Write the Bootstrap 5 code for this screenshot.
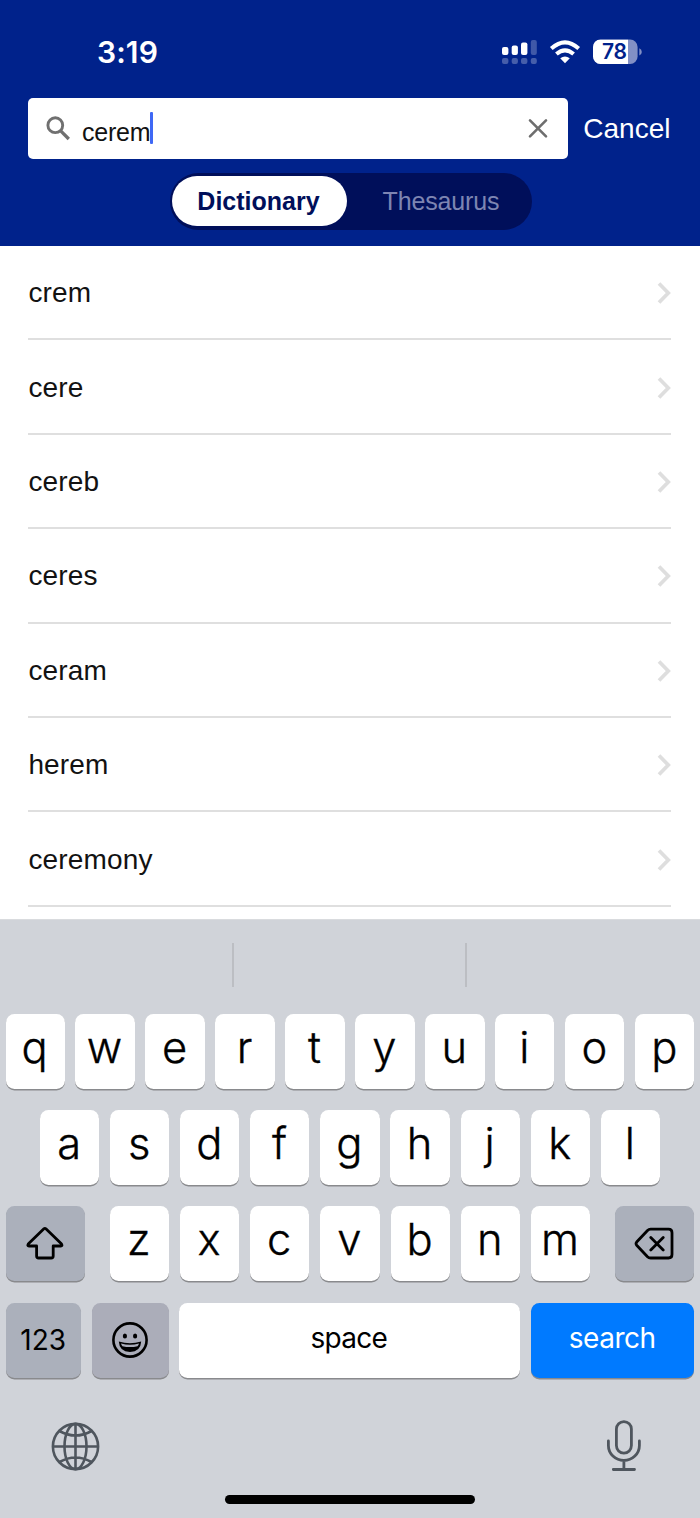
<!DOCTYPE html>
<html lang="en">
<head>
<meta charset="utf-8">
<meta name="viewport" content="width=device-width, initial-scale=1">
<title>Dictionary search</title>
<link href="https://cdn.jsdelivr.net/npm/bootstrap@5.3.0/dist/css/bootstrap.min.css" rel="stylesheet">
<style>
  body { font-family: "Liberation Sans", Arial, sans-serif; background: #fff; color: #121212; }
  .screen { width: 700px; height: 1518px; overflow: hidden; }
  svg { display: block; flex: none; }
  .app-head { height: 246px; background: #00228b; }
  .status { height: 98px; padding: 6px 58px 0 97px; font-family: Inter, sans-serif; }
  .clock { font-size: 30px; font-weight: 600; letter-spacing: .1px; line-height: 1; }
  .search-line { height: 60.5px; padding: 0 29.5px 0 28.4px; }
  .search-box { width: 539.5px; height: 60.5px; background: #fff; border-radius: 5px; padding: 0 19.4px 0 17.6px; }
  .query { font-size: 25px; line-height: 1; padding-top: 8px; margin-left: 10.9px; letter-spacing: -.2px; }
  .caret { width: 3px; height: 32px; border-radius: 1px; background: #3f68f5; margin-left: -.2px; }
  .cancel { font-size: 28px; line-height: 1; padding-top: 2px; }
  .switch { width: 362px; height: 57px; margin-top: 14px; margin-left: 170px; background: #000f5a; border-radius: 29px; padding: 0 2px; font-size: 25px; line-height: 1; }
  .switch-on { width: 175px; height: 50px; border-radius: 25px; background: #fff; color: #000f5a; padding-right: 2px; }
  .switch-off { width: 183px; padding-left: 5px; color: #7d85b2; letter-spacing: -.15px; }
  .results { height: 673px; overflow: hidden; padding: 0 28.6px 0 28.4px; }
  .result { height: 94.4px; padding-top: 2px; border-bottom: 2px solid #dfdfdf; font-size: 28px; line-height: 1; letter-spacing: .15px; }
  .keyboard { height: 599px; background: #d0d3d9; font-family: Inter, sans-serif; color: #000; border-top: 1px solid #d9dbde; }
  .suggest { height: 94px; padding: 23px 0 0 232px; }
  .suggest > div { height: 44px; width: 233px; border-left: 2px solid #bcbec3; }
  .keys { height: 75px; margin-bottom: 21.2px; padding: 0 5.5px; }
  .keys-mid { padding: 0 40px; }
  .keyc { display: flex; align-items: center; justify-content: center; height: 75px; border-radius: 8.5px; background: #fff; box-shadow: 0 1.6px 0 #898a8d; line-height: 1; flex: none; width: 59.2px; font-size: 43.5px; font-weight: 300; -webkit-text-stroke: .35px currentColor; padding: 0 1px 7.5px 0; }
  .gray { background: #abb0bb; padding: 0; }
  .label { font-size: 28px; font-weight: 400; -webkit-text-stroke: 0; }
  .z-row { width: 480.4px; }
  .w-side { width: 79px; padding-right: 1px; }
  .w-num { width: 75.5px; }
  .w-emoji { width: 77px; background: #abadb9; }
  .w-space { width: 341px; padding: 0 2px 5px 0; letter-spacing: -.7px; }
  .w-search { width: 163.5px; padding: 0 1px 5px 0; background: #007aff; color: #fff; letter-spacing: -.5px; }
  .dock { padding: 39px 57px 0 51px; height: 98px; }
  .home-wrap { padding-top: 19px; }
  .home-bar { width: 250px; height: 9px; border-radius: 5px; background: #000; }
</style>
</head>
<body>
<div class="screen">
  <header class="app-head">
    <div class="status d-flex align-items-center justify-content-between text-white">
      <span class="clock">3:19</span>
      <svg width="142" height="30" viewBox="500 37 142 30">
        <g fill="#fff">
          <rect x="502" y="47" width="6.4" height="8" rx="2"/><rect x="511.7" y="45.6" width="6.2" height="9.4" rx="2"/><rect x="521" y="42.6" width="6.4" height="12.4" rx="2"/>
          <rect x="530.8" y="40" width="6" height="15" rx="2" opacity=".25"/>
          <g opacity=".27"><rect x="502" y="58" width="6.4" height="6" rx="2"/><rect x="511.7" y="58" width="6.2" height="6" rx="2"/><rect x="521" y="58" width="6.4" height="6" rx="2"/><rect x="530.8" y="58" width="6" height="6" rx="2"/></g>
          <path d="M560.2 58.3Q565 54.8 569.8 58.3L565 63.2Z"/>
        </g>
        <path d="M551.3 48.6Q565 36.2 578.7 48.6M556.4 54.1Q565 46.6 573.6 54.1" fill="none" stroke="#fff" stroke-width="4"/>
        <clipPath id="charge"><rect x="593" y="39.5" width="35" height="25"/></clipPath>
        <rect x="593" y="39.5" width="44.6" height="24.5" rx="7.5" fill="#8290c5"/>
        <rect x="593" y="39.5" width="44.6" height="24.5" rx="7.5" fill="#fff" clip-path="url(#charge)"/>
        <path d="M639.3 48.2Q641.8 49.5 641.8 52T639.3 55.6Z" fill="#8290c5"/>
        <text x="614.3" y="59.3" font-size="21" font-weight="600" text-anchor="middle" fill="#00228b" letter-spacing="-.3">78</text>
      </svg>
    </div>
    <div class="search-line d-flex align-items-center justify-content-between">
      <div class="search-box d-flex align-items-center">
        <svg width="25" height="25" viewBox="0 0 25 25" fill="none" stroke="#707070"><circle cx="9.3" cy="9.2" r="7.4" stroke-width="2.9"/><path d="M14.7 14.8L22.8 23" stroke-width="3.3"/></svg>
        <span class="query">cerem</span><span class="caret"></span>
        <svg class="ms-auto" width="22" height="22" viewBox="0 0 22 22" fill="none" stroke="#6e6e6e" stroke-width="2.6" stroke-linecap="round"><path d="M3 3.4l16 16M19 3.4l-16 16"/></svg>
      </div>
      <span class="cancel text-white">Cancel</span>
    </div>
    <div class="switch d-flex align-items-center">
      <span class="switch-on d-flex align-items-center justify-content-center fw-bold">Dictionary</span>
      <span class="switch-off text-center">Thesaurus</span>
    </div>
  </header>

  <svg width="0" height="0" class="position-absolute"><symbol id="chev" viewBox="0 0 14 22"><path d="M2 1.5L11.3 11L2 20.5" fill="none" stroke="#dedede" stroke-width="3.7"/></symbol></svg>
  <main class="results">
    <div class="result d-flex align-items-center justify-content-between"><span>crem</span><svg width="14" height="22"><use href="#chev"/></svg></div>
    <div class="result d-flex align-items-center justify-content-between"><span>cere</span><svg width="14" height="22"><use href="#chev"/></svg></div>
    <div class="result d-flex align-items-center justify-content-between"><span>cereb</span><svg width="14" height="22"><use href="#chev"/></svg></div>
    <div class="result d-flex align-items-center justify-content-between"><span>ceres</span><svg width="14" height="22"><use href="#chev"/></svg></div>
    <div class="result d-flex align-items-center justify-content-between"><span>ceram</span><svg width="14" height="22"><use href="#chev"/></svg></div>
    <div class="result d-flex align-items-center justify-content-between"><span>herem</span><svg width="14" height="22"><use href="#chev"/></svg></div>
    <div class="result d-flex align-items-center justify-content-between"><span>ceremony</span><svg width="14" height="22"><use href="#chev"/></svg></div>
  </main>

  <section class="keyboard">
    <div class="suggest d-flex"><div></div><div></div></div>
    <div class="keys d-flex justify-content-between">
      <span class="keyc">q</span><span class="keyc">w</span><span class="keyc">e</span><span class="keyc">r</span><span class="keyc">t</span><span class="keyc">y</span><span class="keyc">u</span><span class="keyc">i</span><span class="keyc">o</span><span class="keyc">p</span>
    </div>
    <div class="keys keys-mid d-flex justify-content-between">
      <span class="keyc">a</span><span class="keyc">s</span><span class="keyc">d</span><span class="keyc">f</span><span class="keyc">g</span><span class="keyc">h</span><span class="keyc">j</span><span class="keyc">k</span><span class="keyc">l</span>
    </div>
    <div class="keys d-flex justify-content-between">
      <span class="keyc gray w-side"><svg width="40" height="36" viewBox="0 0 40 36" fill="none" stroke="#000" stroke-width="2.8" stroke-linejoin="round"><path d="M18.9 2.8Q19.9 1.9 20.9 2.8L36.6 18.1Q37.7 20 35.8 20H28.2V30Q28.2 32 26.2 32H13.6Q11.6 32 11.6 30V20H4Q2.1 20 3.2 18.1Z"/></svg></span>
      <div class="z-row d-flex justify-content-between">
        <span class="keyc">z</span><span class="keyc">x</span><span class="keyc">c</span><span class="keyc">v</span><span class="keyc">b</span><span class="keyc">n</span><span class="keyc">m</span>
      </div>
      <span class="keyc gray w-side"><svg width="40" height="34" viewBox="0 0 40 34" fill="none" stroke="#000" stroke-width="2.8" stroke-linejoin="round" stroke-linecap="round"><path d="M16.6 2.2H34.5Q38 2.2 38 5.7V27.5Q38 31 34.5 31H16.6Q14.8 31 13.5 29.7L2.9 18.5Q1.2 16.6 2.9 14.7L13.5 3.5Q14.8 2.2 16.6 2.2ZM16.8 10.5L29.2 22.9M29.2 10.5L16.8 22.9"/></svg></span>
    </div>
    <div class="keys d-flex justify-content-between mb-0">
      <span class="keyc gray label w-num">123</span>
      <span class="keyc gray w-emoji"><svg width="36" height="36" viewBox="0 0 36 36"><circle cx="18" cy="18" r="16.6" fill="none" stroke="#000" stroke-width="2.6"/><ellipse cx="12.9" cy="14" rx="2.1" ry="2.5"/><ellipse cx="23.1" cy="14" rx="2.1" ry="2.5"/><path d="M6.8 19.6Q18 22.8 29.2 19.6Q28.6 30 18 30T6.8 19.6Z"/><path d="M9 21.6Q18 24 27 21.6Q26.6 23.3 25.5 24.2Q18 26 10.5 24.2Q9.4 23.3 9 21.6Z" fill="#abadb9"/></svg></span>
      <span class="keyc label w-space">space</span>
      <span class="keyc label w-search">search</span>
    </div>
    <div class="dock d-flex justify-content-between align-items-center">
      <svg width="49" height="49" viewBox="0 0 49 49" fill="none" stroke="#4f565e" stroke-width="2.6"><circle cx="24.5" cy="24.5" r="22.6"/><ellipse cx="24.5" cy="24.5" rx="11" ry="22.6"/><path d="M24.5 2v45M2 24.5h45M8.5 9Q24.5 18 40.5 9M8.5 40Q24.5 31 40.5 40"/></svg>
      <svg width="38" height="52" viewBox="0 0 38 52" fill="none" stroke="#4f565e" stroke-width="2.8" stroke-linecap="round"><rect x="11.4" y="1.6" width="15" height="31.5" rx="7.5"/><path d="M3.4 21v4.5A15.5 15 0 0 0 34.4 25.5V21M18.9 40.7V49.5M8.3 49.5H29.5"/></svg>
    </div>
    <div class="home-wrap d-flex justify-content-center"><div class="home-bar"></div></div>
  </section>
</div>
<script src="https://cdn.jsdelivr.net/npm/bootstrap@5.3.0/dist/js/bootstrap.bundle.min.js"></script>
</body>
</html>
